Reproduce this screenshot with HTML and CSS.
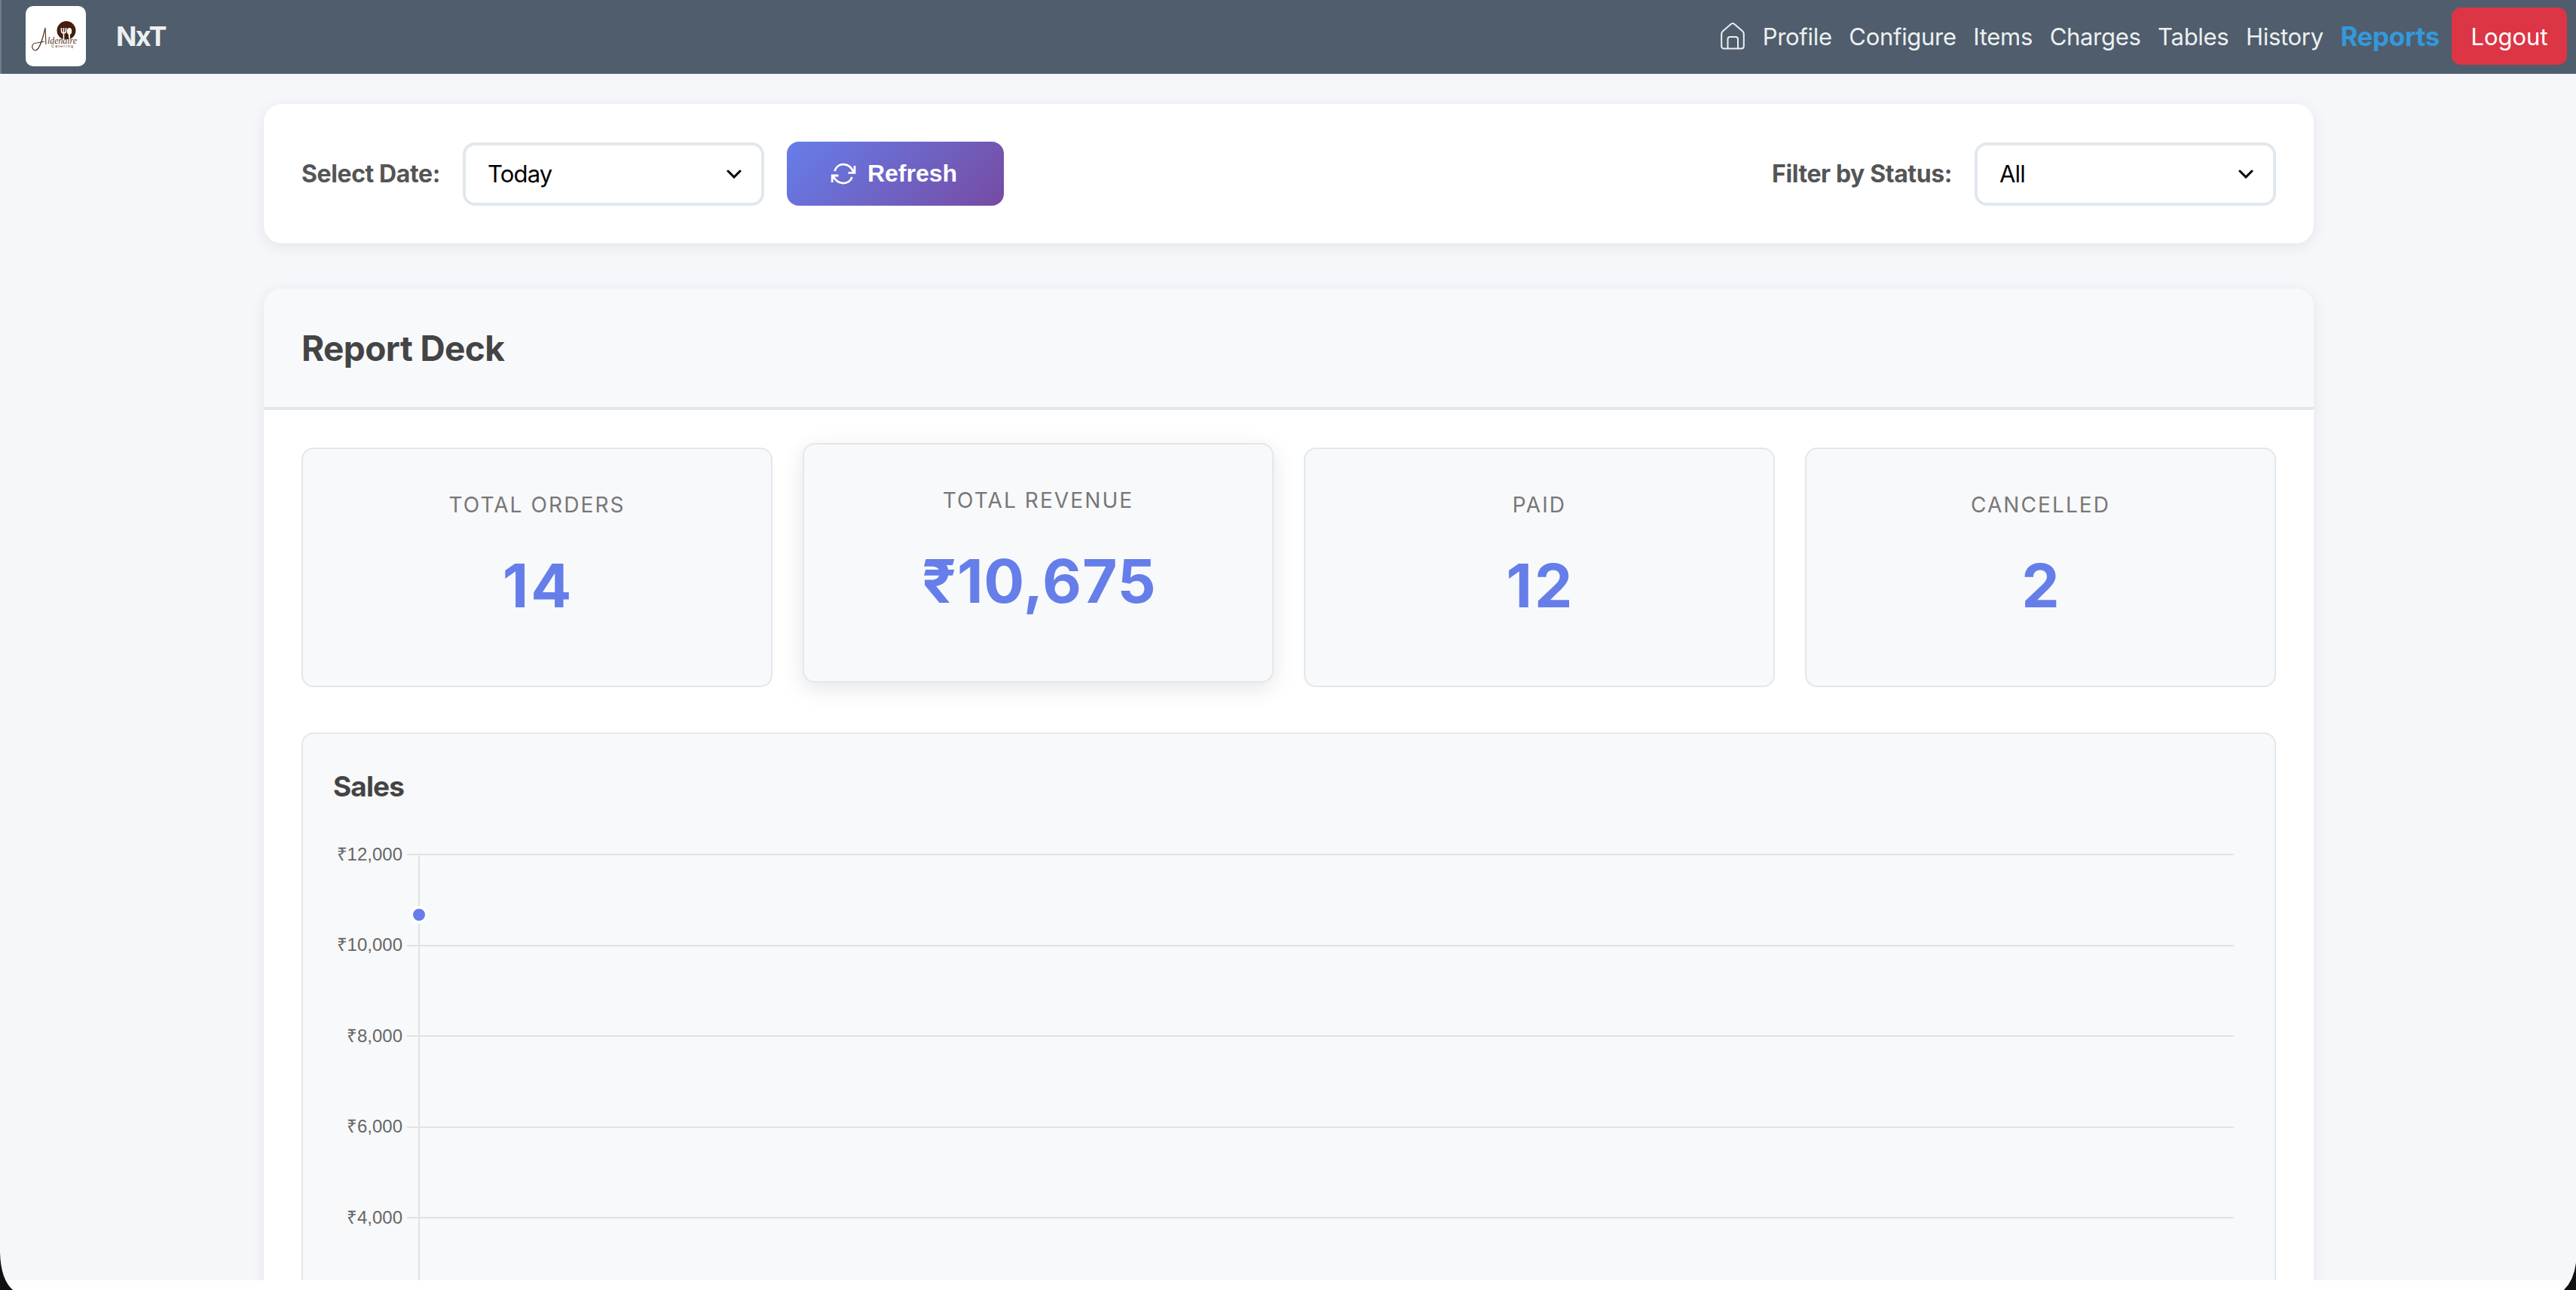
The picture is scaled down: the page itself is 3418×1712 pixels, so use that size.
FILE: index.html
```html
<!DOCTYPE html>
<html lang="en">
<head>
<meta charset="utf-8">
<title>NxT Reports</title>
<link rel="stylesheet" href="styles.css">
</head>
<body>
<div class="page">
  <header class="navbar">
    <div class="brand">
      <svg class="logo" viewBox="0 0 80 80" role="img" aria-label="Aldenaire Catering">
        <circle cx="54" cy="32.5" r="12.5" fill="#44200b"/>
        <path d="M47.5 29v4a3 3 0 0 0 6 0v-4M50.5 29v15" fill="none" stroke="#fff" stroke-width="1.6"/>
        <ellipse cx="58" cy="33.5" rx="3.2" ry="4.4" fill="#fff"/>
        <path d="M58 36v8" stroke="#fff" stroke-width="2"/>
        <path d="M42 44H66V52H42Z" fill="#fff"/>
        <path d="M26 29C23 42 19 58 13 59C8 59 6 49 15 49L25 47M26 29L27 51" fill="none" stroke="#5a3826" stroke-width="1.2"/>
        <text class="logo-name" x="29" y="49.5" textLength="39" lengthAdjust="spacingAndGlyphs">ldenaire</text>
        <text class="logo-sub" x="34" y="54.5" textLength="29">Catering</text>
      </svg>
      <span class="brand-name">NxT</span>
    </div>
    <nav class="nav">
      <a class="home"><svg viewBox="0 0 32 36"><path d="M1.2 15.5Q1.2 13 3 11.3L14 1.8Q16 .4 18 1.8L29 11.3Q30.8 13 30.8 15.5V31Q30.8 34.5 27.3 34.5H4.7Q1.2 34.5 1.2 31ZM9.5 34V22Q9.5 19 12.5 19H20Q23 19 23 22V34"/></svg></a>
      <a>Profile</a><a>Configure</a><a>Items</a><a>Charges</a><a>Tables</a><a>History</a>
      <a class="active">Reports</a>
    </nav>
    <button class="logout">Logout</button>
  </header>

  <main class="content">
    <section class="filters">
      <div class="group">
        <span class="label">Select Date:</span>
        <div class="select"><span>Today</span><svg class="chevron" viewBox="0 0 20 12"><path d="M2 2l8 8 8-8"/></svg></div>
        <button class="refresh">
          <svg viewBox="0 0 34 30"><path d="M5.5 11C9 -1 25 -1 30.5 12.5M32 4V13.3H23.5M28.5 19C25 30 9 30 3.5 17.5M2.2 26V17H10.5"/></svg>
          <span>Refresh</span>
        </button>
      </div>
      <div class="group">
        <span class="label">Filter by Status:</span>
        <div class="select"><span>All</span><svg class="chevron" viewBox="0 0 20 12"><path d="M2 2l8 8 8-8"/></svg></div>
      </div>
    </section>

    <section class="deck">
      <h2 class="deck-title">Report Deck</h2>
      <div class="deck-body">
        <div class="stats">
          <div class="stat"><div class="stat-label">TOTAL ORDERS</div><div class="stat-value">14</div></div>
          <div class="stat raised"><div class="stat-label">TOTAL REVENUE</div><div class="stat-value amount">₹10,675</div></div>
          <div class="stat"><div class="stat-label">PAID</div><div class="stat-value">12</div></div>
          <div class="stat"><div class="stat-label">CANCELLED</div><div class="stat-value single">2</div></div>
        </div>
        <div class="chart">
          <h3 class="chart-title">Sales</h3>
          <svg class="plot" width="2536" height="800" viewBox="0 0 2536 800">
            <g class="grid">
              <path d="M98 24H2522M98 145H2522M98 265H2522M98 386H2522M98 506H2522"/>
              <path d="M114 24V763"/>
            </g>
            <g class="ticks">
              <text x="92" y="32">₹12,000</text>
              <text x="92" y="152">₹10,000</text>
              <text x="92" y="273">₹8,000</text>
              <text x="92" y="393">₹6,000</text>
              <text x="92" y="514">₹4,000</text>
            </g>
            <circle class="point" cx="114" cy="104" r="10"/>
          </svg>
        </div>
      </div>
    </section>
  </main>
</div>
<svg class="corner left" viewBox="0 0 20 60"><path d="M0 10Q1 46 17 60H0Z"/></svg>
<svg class="corner right" viewBox="0 0 20 60"><path d="M20 24Q17 47 4 60H20Z"/></svg>
</body>
</html>
```
FILE: styles.css
```css
* { box-sizing: border-box; }

body {
  margin: 0;
  height: 1712px;
  overflow: hidden;
  position: relative;
  background: #fff;
  font-family: Inter, "Liberation Sans", sans-serif;
}

.page {
  height: 1699px;
  overflow: hidden;
  background: #f5f7fb;
}

/* Navigation */
.navbar {
  display: flex;
  align-items: center;
  height: 98px;
  padding: 0 12px 2px 32px;
  background: #505d6c;
  border-left: 2px solid #727c89;
}

.brand {
  display: flex;
  align-items: center;
  gap: 40px;
  margin-right: auto;
}

.logo {
  width: 80px;
  height: 80px;
  border-radius: 10px;
  background: #fff;
}

.logo-name {
  font: italic 13px "Liberation Serif", serif;
  fill: #5a3826;
}

.logo-sub {
  font: 5.5px "Liberation Sans", sans-serif;
  fill: #5a3826;
}

.brand-name {
  font-size: 36px;
  font-weight: 700;
  letter-spacing: -1.8px;
  color: #ecf0f1;
}

.nav {
  display: flex;
  align-items: center;
  gap: 22.6px;
  font-size: 31px;
  letter-spacing: -0.3px;
  color: #ecf0f1;
}

.home { margin-right: 1.5px; }

.home svg {
  display: block;
  width: 32px;
  height: 36px;
  fill: none;
  stroke: #ecf0f1;
  stroke-width: 2;
}

.nav .active {
  font-size: 35px;
  font-weight: 700;
  letter-spacing: -0.35px;
  color: #3498db;
}

.logout {
  width: 153px;
  height: 76px;
  margin-left: 16px;
  padding: 0;
  border: 0;
  border-radius: 12px;
  background: #dc3545;
  color: #fff;
  font: 31px Inter, sans-serif;
}

/* Filters */
.content {
  width: 2720px;
  margin: 40px 0 0 350px;
}

.filters {
  display: flex;
  justify-content: space-between;
  padding: 50px;
  border-radius: 24px;
  background: #fff;
  box-shadow: 0 4px 20px rgba(0, 0, 0, 0.08);
}

.group {
  display: flex;
  align-items: center;
  gap: 30px;
}

.label {
  font-size: 32px;
  font-weight: 700;
  letter-spacing: -0.4px;
  color: #555;
}

.select {
  display: flex;
  align-items: center;
  justify-content: space-between;
  width: 400px;
  height: 84px;
  padding: 0 26px 0 29px;
  border: 4px solid #e1e8ed;
  border-radius: 16px;
  font-size: 31px;
  letter-spacing: -0.8px;
  color: #000;
}

.chevron {
  width: 20px;
  height: 12px;
  fill: none;
  stroke: #000;
  stroke-width: 3;
  stroke-linecap: round;
}

.refresh {
  display: flex;
  align-items: center;
  gap: 15px;
  width: 288px;
  height: 85px;
  padding: 0 0 0 58px;
  border: 0;
  border-radius: 16px;
  background: linear-gradient(135deg, #667eea 0%, #764ba2 100%);
  color: #fff;
  font: bold 32px "Liberation Sans", Arial, sans-serif;
}

.refresh svg {
  width: 34px;
  height: 30px;
  fill: none;
  stroke: #fff;
  stroke-width: 2.8;
}

/* Report deck */
.deck {
  margin-top: 60px;
  border-radius: 24px;
  overflow: hidden;
  background: #fff;
  box-shadow: 0 4px 20px rgba(0, 0, 0, 0.08);
}

.deck-title {
  margin: 0;
  height: 161px;
  padding-left: 50px;
  border-bottom: 4px solid #e1e8ed;
  background: #f8f9fb;
  font-size: 46px;
  font-weight: 700;
  line-height: 158px;
  letter-spacing: -0.6px;
  color: #444;
}

.deck-body { padding: 50px; }

.stats {
  display: grid;
  grid-template-columns: repeat(4, 1fr);
  gap: 40px;
}

.stat {
  height: 318px;
  padding-top: 54px;
  border: 2px solid #e1e8ed;
  border-radius: 16px;
  background: #f8f9fb;
  text-align: center;
}

.stat.raised {
  transform: translateY(-6px);
  box-shadow: 0 8px 30px rgba(0, 0, 0, 0.1);
}

.stat-label {
  font-size: 28px;
  line-height: 40px;
  letter-spacing: 2.1px;
  color: #777;
}

.stat-value {
  margin-top: 37px;
  padding-left: 3px;
  font-size: 80px;
  font-weight: 700;
  line-height: 100px;
  letter-spacing: 3px;
  color: #667eea;
}

.stat-value.amount { letter-spacing: 0.9px; }

.stat-value.single {
  padding-left: 0;
  letter-spacing: 0;
}

/* Sales chart */
.chart {
  margin-top: 60px;
  padding: 46px 40px 40px;
  border: 2px solid #e1e8ed;
  border-radius: 16px;
  background: #f8f9fb;
}

.chart-title {
  margin: 0 0 42px;
  font-size: 37px;
  font-weight: 700;
  line-height: 48px;
  letter-spacing: -0.9px;
  color: #444;
}

.plot { display: block; }

.grid {
  fill: none;
  stroke: #e0e2e3;
  stroke-width: 2;
}

.ticks {
  font: 24px "Liberation Sans", Arial, sans-serif;
  fill: #666;
  text-anchor: end;
}

.point {
  fill: #667eea;
  stroke: #fff;
  stroke-width: 4;
}

/* Rounded window corners */
.corner {
  position: absolute;
  bottom: 0;
  width: 20px;
  height: 60px;
  fill: #111;
}

.corner.left { left: 0; }
.corner.right { right: 0; }
```
